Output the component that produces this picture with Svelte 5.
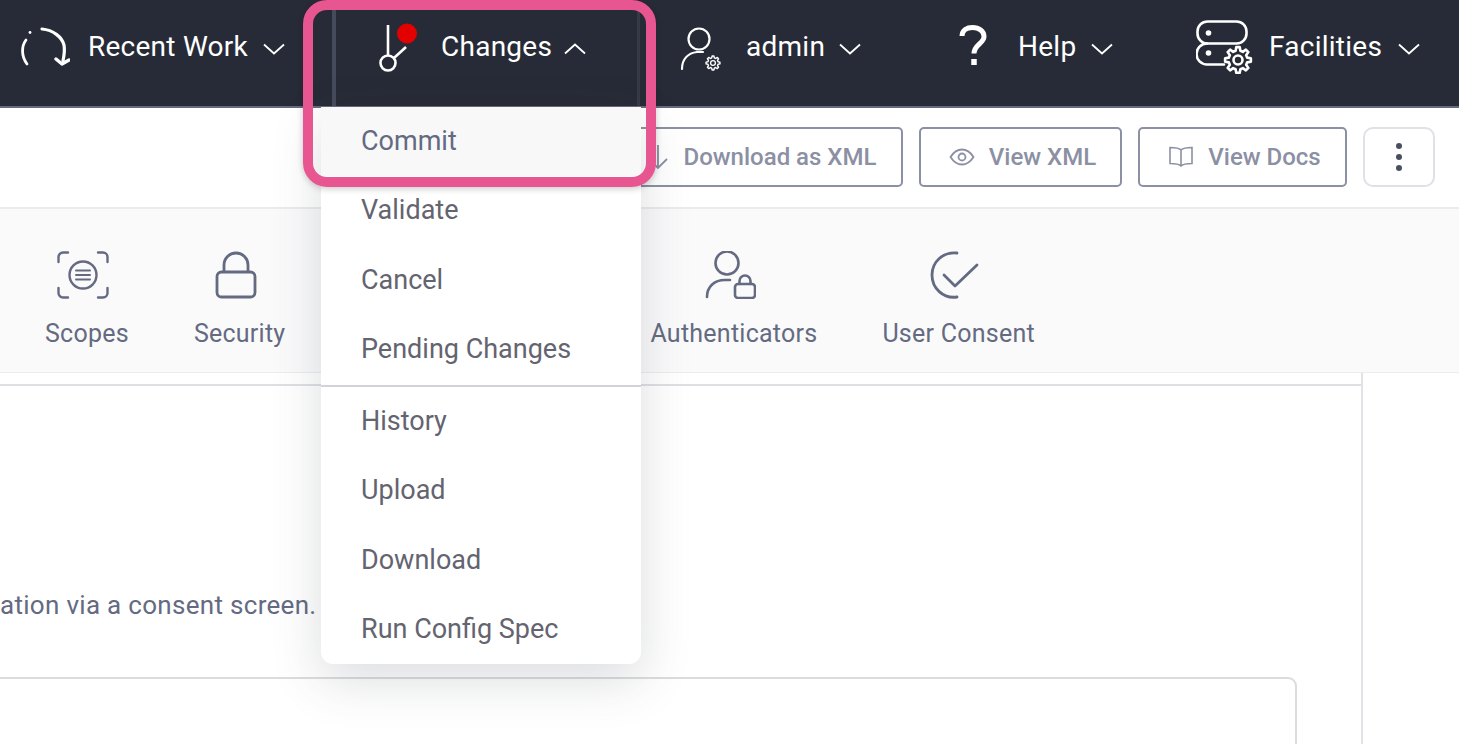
<script lang="ts">
	const menuTop = ['Commit', 'Validate', 'Cancel', 'Pending Changes'];
	const menuBottom = ['History', 'Upload', 'Download', 'Run Config Spec'];

	// toothed outline for the small settings gears in the nav icons
	function gear(cx: number, cy: number, inner: number, outer: number, teeth: number): string {
		const step = (Math.PI * 2) / teeth;
		const pts: string[] = [];
		for (let i = 0; i < teeth; i++) {
			const a = i * step;
			const spots = [
				[inner, a - step * 0.32],
				[outer, a - step * 0.17],
				[outer, a + step * 0.17],
				[inner, a + step * 0.32]
			];
			for (const [r, t] of spots) {
				pts.push(`${(cx + r * Math.sin(t)).toFixed(2)} ${(cy - r * Math.cos(t)).toFixed(2)}`);
			}
		}
		return 'M' + pts.join('L') + 'Z';
	}
</script>

<div class="page">
	<header class="topbar">
		<div class="nav-item recent">
			<svg class="nav-icon" width="52" height="42" viewBox="0 0 52 42" fill="none" stroke="#fff" stroke-width="2.800" stroke-linecap="round">
				<path d="M8 15C3.500 21 3 31 9 39" />
				<path d="M12 7.500h.01" />
				<path d="M24 4c11 1 20 8 22 16 1 5 0 11-1 16" stroke-width="3.200" />
				<path d="M38 34l6 5 7-4" stroke-width="3.400" stroke-linejoin="round" />
			</svg>
			<span>Recent Work</span>
			<svg class="chev" width="22" height="12" viewBox="0 0 22 12" fill="none" stroke="#fff" stroke-width="1.800"><path d="M1 1.500l10 9 10-9" /></svg>
		</div>
		<div class="nav-item changes">
			<div class="divider"></div>
			<div class="divider divider-right"></div>
			<svg class="nav-icon" width="40" height="52" viewBox="0 0 40 52" fill="none" stroke="#fff" stroke-width="2.600">
				<path d="M9 2v31" />
				<circle cx="9" cy="40" r="7.500" />
				<path d="M15 35L27 24" />
				<circle cx="28" cy="10.500" r="10" fill="#e30000" stroke="none" />
			</svg>
			<span>Changes</span>
			<svg class="chev" width="22" height="12" viewBox="0 0 22 12" fill="none" stroke="#fff" stroke-width="1.800"><path d="M1 10.500l10-9 10 9" /></svg>
		</div>
		<div class="nav-item admin">
			<svg class="nav-icon" width="42" height="46" viewBox="0 0 42 46" fill="none" stroke="#fff" stroke-width="2.200" stroke-linecap="round">
				<circle cx="19" cy="13" r="10.500" />
				<path d="M2 43c0-10 6-16 15-17h6" />
				<circle cx="33" cy="37" r="2.400" stroke-width="1.300" />
				<path d={gear(33, 37, 5.200, 7, 8)} stroke-width="1.400" stroke-linejoin="round" />
			</svg>
			<span>admin</span>
			<svg class="chev" width="22" height="12" viewBox="0 0 22 12" fill="none" stroke="#fff" stroke-width="1.800"><path d="M1 1.500l10 9 10-9" /></svg>
		</div>
		<div class="nav-item help">
			<svg class="nav-icon" width="28" height="42" viewBox="0 0 28 42" fill="none" stroke="#fff" stroke-width="5">
				<path d="M3 11C3 5 8 2.500 13.500 2.500 20 2.500 25 6 25 11.500c0 7-10 8-10 17" />
				<path d="M15 34v6" stroke-width="5.500" />
			</svg>
			<span>Help</span>
			<svg class="chev" width="22" height="12" viewBox="0 0 22 12" fill="none" stroke="#fff" stroke-width="1.800"><path d="M1 1.500l10 9 10-9" /></svg>
		</div>
		<div class="nav-item facilities">
			<svg class="nav-icon" width="58" height="54" viewBox="0 0 58 54" fill="none" stroke="#fff" stroke-width="2.600" stroke-linecap="round">
				<rect x="1.500" y="1.500" width="49" height="22" rx="10" />
				<path d="M11 23.500a10.500 10.500 0 0 0 0 21h17" />
				<circle cx="12.500" cy="13" r="2.800" fill="#fff" stroke="none" />
				<circle cx="12.500" cy="33" r="2.800" fill="#fff" stroke="none" />
				<path d={gear(42, 40, 9.500, 13, 8)} fill="#272b37" stroke-linejoin="round" />
				<circle cx="42" cy="40" r="4.500" />
			</svg>
			<span>Facilities</span>
			<svg class="chev" width="22" height="12" viewBox="0 0 22 12" fill="none" stroke="#fff" stroke-width="1.800"><path d="M1 1.500l10 9 10-9" /></svg>
		</div>
	</header>

	<div class="toolbar">
		<button class="tool-btn download">
			<svg width="24" height="26" viewBox="0 0 24 26" fill="none" stroke="#8b90a4" stroke-width="1.800"><path d="M12 1v23M3 15l9 9 9-9" /></svg>
			Download as XML
		</button>
		<button class="tool-btn xml">
			<svg width="26" height="18" viewBox="0 0 26 18" fill="none" stroke="#8b90a4" stroke-width="1.800"><path d="M1.500 9C5 3.500 9 1.500 13 1.500S21 3.500 24.500 9C21 14.500 17 16.500 13 16.500S5 14.500 1.500 9z" /><circle cx="13" cy="9" r="3.500" /></svg>
			View XML
		</button>
		<button class="tool-btn docs">
			<svg width="26" height="22" viewBox="0 0 26 22" fill="none" stroke="#8b90a4" stroke-width="1.600"><path d="M13 4C11 2 7 1.500 2 1.500v16c5 0 9 .5 11 2.500 2-2 6-2.500 11-2.500v-16C19 1.500 15 2 13 4zM13 4v16" /></svg>
			View Docs
		</button>
		<button class="more-btn" aria-label="More">
			<span></span><span></span><span></span>
		</button>
	</div>

	<nav class="tabs">
		<div class="tab">
			<svg width="52" height="48" viewBox="0 0 52 48" fill="none" stroke="#646a81" stroke-width="2.400" stroke-linecap="round">
				<path d="M11 1.500H6a4.500 4.500 0 0 0-4.500 4.500v5M41 1.500h5A4.500 4.500 0 0 1 50.500 6v5M11 46.500H6A4.500 4.500 0 0 1 1.500 42v-5M41 46.500h5a4.500 4.500 0 0 0 4.500-4.500v-5" />
				<circle cx="26" cy="24" r="13.500" />
				<path d="M19 19.500h14M19 24h14M19 28.500h14" stroke-width="2" />
			</svg>
			<span>Scopes</span>
		</div>
		<div class="tab">
			<svg width="44" height="48" viewBox="0 0 44 48" fill="none" stroke="#646a81" stroke-width="2.800">
				<rect x="3" y="21" width="38" height="25" rx="4.500" />
				<path d="M10 21v-7a12 12 0 0 1 24 0v7" />
			</svg>
			<span>Security</span>
		</div>
		<div class="tab-spacer"></div>
		<div class="tab">
			<svg width="52" height="48" viewBox="0 0 52 48" fill="none" stroke="#646a81" stroke-width="2.600" stroke-linecap="round">
				<circle cx="23" cy="12" r="11.500" />
				<path d="M3 46c0-10 7-17 18-17h5" />
				<rect x="31" y="33" width="20" height="14" rx="3" />
				<path d="M35.500 33v-3a5.500 5.500 0 0 1 11 0v3" />
			</svg>
			<span>Authenticators</span>
		</div>
		<div class="tab">
			<svg width="50" height="48" viewBox="0 0 50 48" fill="none" stroke="#646a81" stroke-width="2.800" stroke-linecap="round" stroke-linejoin="round">
				<path d="M27 2C13 .5 2 11 2 24s11 24 25 22" />
				<path d="M14 24l11 11 22-21" />
			</svg>
			<span>User Consent</span>
		</div>
	</nav>

	<main class="content">
		<section class="panel">
			<p class="desc">ation via a consent screen.</p>
			<div class="card"></div>
		</section>
	</main>

	<div class="menu">
		<ul>
			{#each menuTop as item, i}
				<li class:active={i === 0}>{item}</li>
			{/each}
		</ul>
		<ul class="second">
			{#each menuBottom as item}
				<li>{item}</li>
			{/each}
		</ul>
	</div>

	<div class="highlight"></div>
</div>

<style>
	:global(body) {
		margin: 0;
		background: #fff;
	}

	.page {
		position: relative;
		width: 1459px;
		height: 744px;
		overflow: hidden;
		font-family: Roboto, 'Liberation Sans', sans-serif;
	}

	.topbar {
		display: flex;
		align-items: flex-start;
		height: 106px;
		background: #272b37;
		border-bottom: 2px solid #656a80;
		color: #fff;
		font-size: 28px;
		letter-spacing: 0.25px;
	}

	.nav-item {
		position: relative;
		display: flex;
		align-items: center;
		height: 92px;
		white-space: nowrap;
	}

	.chev {
		flex: none;
		margin-top: 6px;
	}

	.recent {
		padding-left: 18px;
		width: 316px;
		box-sizing: border-box;
	}

	.recent span {
		margin: 0 15px 0 18px;
	}

	.changes {
		width: 325px;
		padding-left: 63px;
		box-sizing: border-box;
	}

	.changes .nav-icon {
		margin-top: 6px;
	}

	.changes span {
		margin: 0 12px 0 22px;
	}

	.divider {
		position: absolute;
		left: 16px;
		top: 10px;
		width: 4px;
		height: 96px;
		background: #464b5c;
	}

	.divider-right {
		left: 321px;
		width: 3px;
		background: #363a48;
	}

	.admin {
		width: 278px;
		padding-left: 39px;
		box-sizing: border-box;
	}

	.admin span {
		margin: 0 14px 0 24px;
	}

	.admin .nav-icon {
		margin-top: 6px;
	}

	.help {
		width: 237px;
		padding-left: 40px;
		box-sizing: border-box;
	}

	.help span {
		margin: 0 15px 0 31px;
	}

	.facilities {
		padding-left: 40px;
	}

	.facilities .nav-icon {
		margin-top: 2px;
	}

	.facilities span {
		margin: 0 16px 0 15px;
	}

	.toolbar {
		display: flex;
		justify-content: flex-end;
		align-items: center;
		gap: 16px;
		height: 97px;
		padding-right: 24px;
		padding-bottom: 2px;
		background: #fff;
		border-bottom: 2px solid #ebebee;
	}

	.tool-btn {
		display: flex;
		flex: none;
		align-items: center;
		justify-content: center;
		gap: 14px;
		height: 60px;
		padding: 0 0 0 4px;
		background: #fff;
		border: 2px solid #8b90a4;
		border-radius: 5px;
		color: #8b90a4;
		font-family: inherit;
		font-size: 24px;
		font-weight: 500;
	}

	.download {
		width: 284px;
		padding: 0;
	}

	.xml {
		width: 203px;
	}

	.docs {
		width: 209px;
	}

	.more-btn {
		display: flex;
		flex: none;
		flex-direction: column;
		align-items: center;
		justify-content: center;
		gap: 5px;
		width: 72px;
		height: 60px;
		padding: 0;
		background: #fff;
		border: 2px solid #e0e1e6;
		border-radius: 10px;
	}

	.more-btn span {
		width: 6px;
		height: 6px;
		border-radius: 50%;
		background: #4a4f60;
	}

	.tabs {
		display: flex;
		gap: 65px;
		height: 164px;
		padding-left: 45px;
		box-sizing: border-box;
		background: #fafafb;
		border-bottom: 1px solid #ececef;
	}

	.tab {
		display: flex;
		flex-direction: column;
		align-items: center;
		padding-top: 42px;
		color: #646a81;
		font-size: 25px;
		letter-spacing: 0.25px;
		white-space: nowrap;
	}

	.tab svg {
		flex: none;
		margin-right: 7px;
	}

	.tab span {
		margin-top: 20px;
	}

	.tab-spacer {
		width: 235px;
	}

	.content {
		width: 1361px;
		padding-top: 11px;
		border-right: 2px solid #e2e2e6;
	}

	.panel {
		height: 360px;
		box-sizing: border-box;
		border-top: 2px solid #dfdfe3;
	}

	.desc {
		margin: 204px 0 0;
		font-size: 26px;
		letter-spacing: 0.3px;
		line-height: 30px;
		color: #646a81;
		white-space: nowrap;
	}

	.card {
		width: 1297px;
		height: 120px;
		margin-top: 57px;
		box-sizing: border-box;
		border: 2px solid #dcdce0;
		border-left: none;
		border-top-right-radius: 9px;
	}

	.menu {
		position: absolute;
		left: 321px;
		top: 107px;
		width: 320px;
		background: #fff;
		border-radius: 0 0 12px 12px;
		box-shadow: 0 16px 50px rgba(60, 64, 80, 0.18);
		color: #636470;
		font-size: 27px;
	}

	.menu ul {
		margin: 0;
		padding: 0;
		list-style: none;
	}

	.menu li {
		height: 69.300px;
		line-height: 69.300px;
		padding-left: 40px;
		white-space: nowrap;
	}

	.menu li.active {
		background: #f8f8f9;
		color: #646a81;
	}

	.menu .second {
		border-top: 2px solid #d2d3d9;
		margin-top: 1px;
	}

	.highlight {
		position: absolute;
		left: 303px;
		top: 0;
		width: 353px;
		height: 187px;
		box-sizing: border-box;
		border: 10px solid #e75690;
		border-radius: 24px;
		box-shadow: 0 2px 6px rgba(0, 0, 0, 0.2);
	}
</style>
